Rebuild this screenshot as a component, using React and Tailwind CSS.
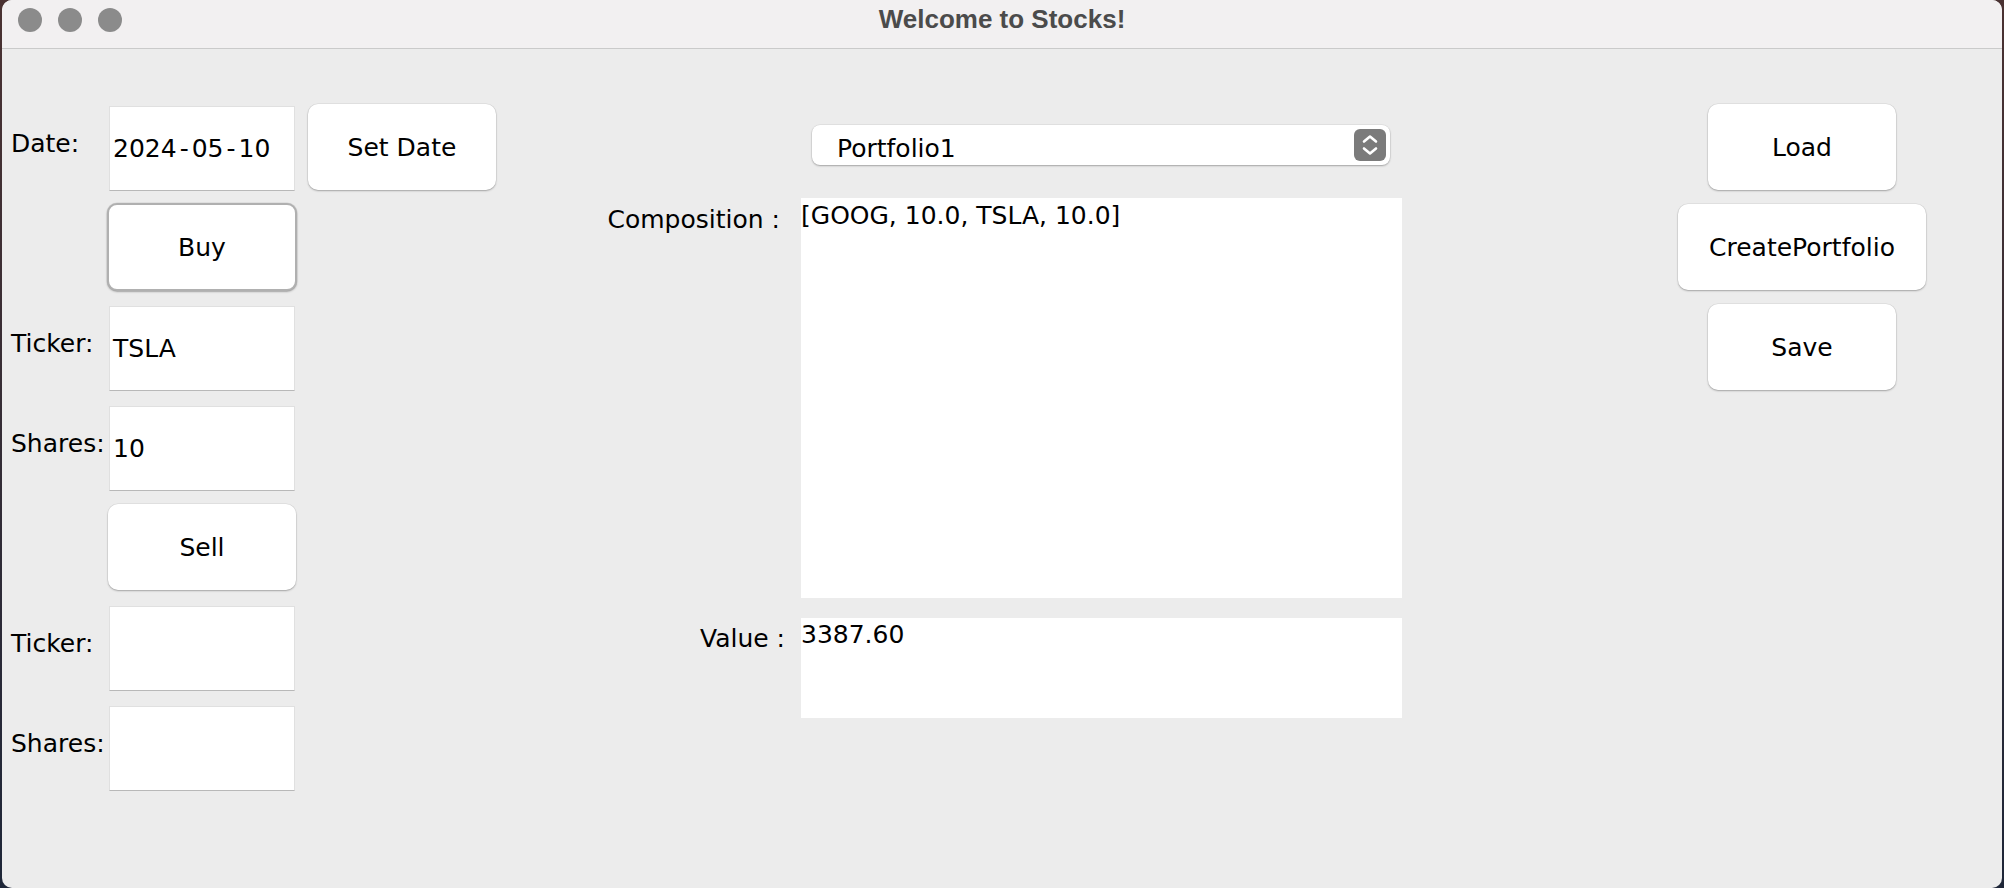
import React from 'react';

// Swing "Welcome to Stocks!" window, drawn at 2x
const btnShadow = 'shadow-[0_0_0_0.5px_rgba(0,0,0,0.08),0_1px_2px_rgba(0,0,0,0.28)]';

const Field = ({ children }) => (
  <div className="col-start-2 h-[85px] w-[186px] bg-white border border-[#e0e0e0] border-b-[#b8b8b8] flex items-center pl-[3px] whitespace-nowrap">
    {children}
  </div>
);

const Label = ({ children }) => (
  <div className="col-start-1 flex items-center pb-[11px] whitespace-nowrap">{children}</div>
);

const Button = ({ children, className = '' }) => (
  <button className={`flex items-center justify-center bg-white rounded-[10px] h-[86px] ${btnShadow} ${className}`}>
    {children}
  </button>
);

const Chevrons = () => (
  <svg width="32" height="32" viewBox="0 0 32 32" className="rounded-[6px] bg-[#7b7b7b]">
    <path d="M10 12.5 L16 7.5 L22 12.5" fill="none" stroke="white" strokeWidth="2.6" strokeLinecap="round" strokeLinejoin="round" />
    <path d="M10 19.5 L16 24.5 L22 19.5" fill="none" stroke="white" strokeWidth="2.6" strokeLinecap="round" strokeLinejoin="round" />
  </svg>
);

export default function App() {
  return (
    <div className="w-[2004px] h-[888px] px-[2px] bg-linear-to-b from-[#4a3232] to-[#1e2638]">
      <div className="h-full rounded-[10px] overflow-hidden bg-[#ececec] flex flex-col font-['DejaVu_Sans','Liberation_Sans',sans-serif] text-[25px] leading-[25px] text-black">
        {/* title bar */}
        <div className="h-[49px] shrink-0 bg-[#f2f0f1] border-b border-[#cacaca] grid grid-cols-[1fr_auto_1fr]">
          <div className="flex gap-[16px] pl-[16px] pt-[8px]">
            <span className="w-[24px] h-[24px] rounded-full bg-[#8b8b8b]" />
            <span className="w-[24px] h-[24px] rounded-full bg-[#8b8b8b]" />
            <span className="w-[24px] h-[24px] rounded-full bg-[#8b8b8b]" />
          </div>
          <div className="pt-[6px] font-['Liberation_Sans',sans-serif] font-bold text-[26px] leading-[26px] text-[#4b4b4b]">
            Welcome to Stocks!
          </div>
          <div />
        </div>

        <div className="flex items-start">
          {/* left: date / buy / sell */}
          <div className="w-[494px] pl-[9px] pt-[57px] grid grid-cols-[85px_186px_188px] grid-rows-[repeat(7,85px)] gap-x-[13px] gap-y-[15px]">
            <Label>Date:</Label>
            <Field>
              2024<span className="px-[3px]">-</span>05<span className="px-[3px]">-</span>10
            </Field>
            <Button className="col-start-3 w-[188px] -mt-[2px]">Set Date</Button>

            <Button className="col-start-2 w-[190px] h-[88px] -ml-[2px] -mt-[3px] border-2 border-[#b0b0b0]">Buy</Button>

            <Label>Ticker:</Label>
            <Field>TSLA</Field>

            <Label>Shares:</Label>
            <Field>10</Field>

            <Button className="col-start-2 w-[188px] -ml-px -mt-[2px]">Sell</Button>

            <Label>Ticker:</Label>
            <Field />

            <Label>Shares:</Label>
            <Field />
          </div>

          {/* middle: portfolio view */}
          <div className="w-[906px] pt-[76px] grid grid-cols-[289px_601px] gap-x-[16px]">
            <div className="col-start-2 pl-[11px] pr-[12px]">
              <div className={`h-[40px] bg-white rounded-[8px] flex items-center justify-between pl-[25px] pr-[4px] ${btnShadow}`}>
                <span className="pt-[6px]">Portfolio1</span>
                <Chevrons />
              </div>
            </div>

            <div className="mt-[33px] pt-[9px] text-right pr-[5px] whitespace-nowrap">Composition :</div>
            <div className="mt-[33px] h-[400px] bg-white pt-[5px]">[GOOG, 10.0, TSLA, 10.0]</div>

            <div className="mt-[20px] pt-[8px] text-right whitespace-nowrap">Value :</div>
            <div className="mt-[20px] h-[100px] bg-white pt-[4px]">3387.60</div>
          </div>

          {/* right: file actions */}
          <div className="ml-[276px] w-[248px] pt-[55px] flex flex-col items-center gap-[14px]">
            <Button className="w-[188px]">Load</Button>
            <Button className="w-[248px]">CreatePortfolio</Button>
            <Button className="w-[188px]">Save</Button>
          </div>
        </div>
      </div>
    </div>
  );
}
